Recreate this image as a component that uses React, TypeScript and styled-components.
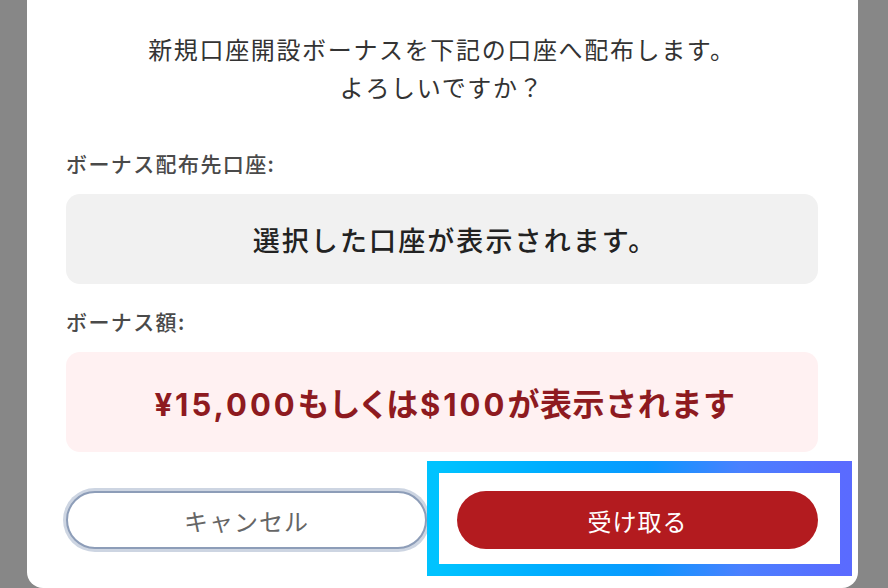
import React from "react";
import styled, { createGlobalStyle } from "styled-components";

const GlobalStyle = createGlobalStyle`
  html, body {
    margin: 0;
    padding: 0;
    background: #878787;
    width: 888px;
    height: 588px;
    overflow: hidden;
  }
  body {
    font-family: "Noto Sans CJK JP", "Noto Sans", sans-serif;
  }
  * { box-sizing: border-box; }
`;

const Page = styled.div`
  width: 888px;
  height: 588px;
  display: flex;
  justify-content: flex-start;
  padding-left: 27px;
`;

const Modal = styled.div`
  width: 831px;
  height: 588px;
  background: #ffffff;
  border-radius: 0 0 16px 16px;
  padding: 30px 40px 0 39px;
  display: flex;
  flex-direction: column;
`;

const Title = styled.p`
  margin: 0;
  text-align: center;
  font-size: 24px;
  line-height: 38px;
  letter-spacing: 1.65px;
  color: #333333;
  font-weight: 400;
`;

const Label = styled.div<{ $top: number }>`
  margin-top: ${(p) => p.$top}px;
  font-size: 21px;
  line-height: 30px;
  letter-spacing: 1.4px;
  font-weight: 500;
  color: #4a4a4a;
`;

const InfoBox = styled.div<{ $tone: "gray" | "pink"; $h: number; $shift: number }>`
  margin-top: 16px;
  height: ${(p) => p.$h}px;
  border-radius: 14px;
  background: ${(p) => (p.$tone === "gray" ? "#f1f1f1" : "#fff1f2")};
  display: flex;
  align-items: center;
  justify-content: center;
  padding-left: ${(p) => p.$shift}px;
`;

const AccountText = styled.span`
  font-size: 27px;
  letter-spacing: 2.1px;
  font-weight: 500;
  color: #222222;
`;

const AmountText = styled.span`
  font-size: 32px;
  letter-spacing: 0.6px;
  font-weight: 700;
  color: #8e1a20;
`;

const Num = styled.span`
  font-family: "Inter", "Noto Sans", sans-serif;
  font-size: 31px;
  letter-spacing: 3px;
  font-weight: 700;
`;

const Kana = styled.span`
  font-feature-settings: "palt";
  letter-spacing: 2px;
`;

const ButtonRow = styled.div`
  position: relative;
  margin-top: 39px;
  display: grid;
  grid-template-columns: 1fr 1fr;
  gap: 30px;
`;

const BaseButton = styled.button`
  height: 58px;
  border-radius: 29px;
  font-family: "Noto Sans CJK JP", "Noto Sans", sans-serif;
  font-size: 24px;
  letter-spacing: 1px;
  font-weight: 400;
  display: flex;
  align-items: center;
  justify-content: center;
  cursor: pointer;
`;

const CancelButton = styled(BaseButton)`
  background: #ffffff;
  color: #666666;
  border: 2px solid #8d9db8;
  box-shadow: 0 0 0 3px #cdd5e2;
`;

const AcceptButton = styled(BaseButton)`
  background: #b31b1f;
  color: #ffffff;
  border: none;
`;

const Highlight = styled.div`
  position: absolute;
  left: 361px;
  top: -30px;
  width: 425px;
  height: 115px;
  border: 12px solid transparent;
  border-image: linear-gradient(90deg, #00c3ff 0%, #00aaff 30%, #0a98ff 52%, #4a80ff 75%, #5a6bff 100%) 1;
  pointer-events: none;
`;

export default function App() {
  return (
    <>
      <GlobalStyle />
      <Page>
        <Modal>
          <Title>
            新規口座開設ボーナスを下記の口座へ配布します。
            <br />
            よろしいですか？
          </Title>
          <Label $top={42}>ボーナス配布先口座:</Label>
          <InfoBox $tone="gray" $h={90} $shift={26}>
            <AccountText>選択した口座が表示されます。</AccountText>
          </InfoBox>
          <Label $top={22}>ボーナス額:</Label>
          <InfoBox $tone="pink" $h={100} $shift={6}>
            <AmountText>
              <Num>¥15,000</Num>
              <Kana>もしくは</Kana>
              <Num>$100</Num>が表示されます
            </AmountText>
          </InfoBox>
          <ButtonRow>
            <CancelButton>キャンセル</CancelButton>
            <AcceptButton>受け取る</AcceptButton>
            <Highlight />
          </ButtonRow>
        </Modal>
      </Page>
    </>
  );
}
